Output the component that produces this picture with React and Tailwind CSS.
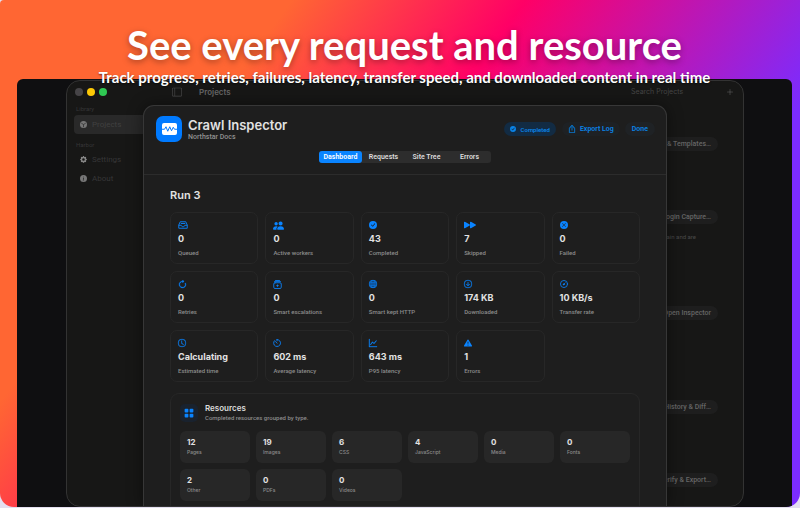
import React, { useState } from 'react';
import {
  BsArrowClockwise,
  BsArrowDownCircle,
  BsBoxArrowUp,
  BsCheckCircleFill,
  BsClock,
  BsExclamationTriangleFill,
  BsFastForwardFill,
  BsGearFill,
  BsGlobe,
  BsGraphUp,
  BsGridFill,
  BsInfoCircleFill,
  BsLayoutSidebar,
  BsPeopleFill,
  BsPlusLg,
  BsXCircleFill,
} from 'react-icons/bs';

const TrayIcon = () => (
  <svg viewBox="0 0 20 16" className="h-[8px] w-[10px]" fill="none" stroke="currentColor" strokeWidth="1.8" strokeLinejoin="round">
    <path d="M1.5 8 4.5 1.5h11L18.5 8v6.5h-17z" />
    <path d="M1.5 8.5h5c0 4 7 4 7 0h5M5.5 5h9" />
  </svg>
);

const EscalateIcon = () => (
  <svg viewBox="0 0 18 18" className="size-[9px]" fill="none" stroke="currentColor" strokeWidth="1.7" strokeLinecap="round">
    <rect x="1.5" y="5.5" width="15" height="11.5" rx="2.5" />
    <path d="M3 3.2h12M5 1h8" />
    <path d="M9 8l1 2.3 2.4 1-2.4 1L9 14.6l-1-2.3-2.4-1 2.4-1z" fill="currentColor" stroke="none" />
  </svg>
);

const GaugeIcon = () => (
  <svg viewBox="0 0 18 18" className="size-[8px] overflow-visible" fill="none" stroke="currentColor" strokeWidth="1.8" strokeLinecap="round">
    <circle cx="9" cy="9" r="8" />
    <path d="M8 10l3.6-3.6" />
    <circle cx="8.3" cy="9.8" r="1.2" fill="currentColor" />
  </svg>
);

const TimerIcon = () => (
  <svg viewBox="0 0 18 18" className="size-[8px] overflow-visible" fill="none" stroke="currentColor" strokeWidth="2" strokeLinecap="round">
    <path d="M9 1.2v3M9 1.2a7.8 7.8 0 1 1-5.6 2.5" />
    <path d="M5.8 5.8 9 9.4" />
  </svg>
);

const WaveIcon = () => (
  <svg viewBox="0 0 30 24" className="h-[12px] w-[15px]">
    <rect width="30" height="24" rx="4" fill="#fff" />
    <path d="M0 12.5h5l3-5 3.5 9 4-9 3.5 8 3.5-7 2.5 4h5" fill="none" stroke="#007aff" strokeWidth="2" strokeLinejoin="round" />
  </svg>
);

const CubeIcon = () => (
  <svg viewBox="0 0 16 16" className="size-[7px]">
    <circle cx="8" cy="8" r="8" fill="currentColor" />
    <path d="M3 5l5 3 5-3M8 8v6" fill="none" stroke="#2a2a2a" strokeWidth="1.6" />
  </svg>
);

const stats = [
  { icon: <TrayIcon />, value: '0', label: 'Queued' },
  { icon: <BsPeopleFill className="size-[11px]" />, value: '0', label: 'Active workers' },
  { icon: <BsCheckCircleFill />, value: '43', label: 'Completed' },
  { icon: <BsFastForwardFill className="size-[12px]" />, value: '7', label: 'Skipped' },
  { icon: <BsXCircleFill />, value: '0', label: 'Failed' },
  { icon: <BsArrowClockwise className="size-[9px] stroke-[0.8]" />, value: '0', label: 'Retries' },
  { icon: <EscalateIcon />, value: '0', label: 'Smart escalations' },
  { icon: <BsGlobe className="overflow-visible stroke-[0.4]" />, value: '0', label: 'Smart kept HTTP' },
  { icon: <BsArrowDownCircle className="overflow-visible stroke-[0.5]" />, value: '174 KB', label: 'Downloaded' },
  { icon: <GaugeIcon />, value: '10 KB/s', label: 'Transfer rate' },
  { icon: <BsClock className="overflow-visible stroke-[0.5]" />, value: 'Calculating', label: 'Estimated time' },
  { icon: <TimerIcon />, value: '602 ms', label: 'Average latency' },
  { icon: <BsGraphUp className="overflow-visible stroke-[0.7]" />, value: '643 ms', label: 'P95 latency' },
  { icon: <BsExclamationTriangleFill />, value: '1', label: 'Errors' },
];

const resources = [
  { value: 12, label: 'Pages' },
  { value: 19, label: 'Images' },
  { value: 6, label: 'CSS' },
  { value: 4, label: 'JavaScript' },
  { value: 0, label: 'Media' },
  { value: 0, label: 'Fonts' },
  { value: 2, label: 'Other' },
  { value: 0, label: 'PDFs' },
  { value: 0, label: 'Videos' },
];

const tabs = ['Dashboard', 'Requests', 'Site Tree', 'Errors'];

const Sidebar = () => (
  <aside className="w-[90px] shrink-0 pl-[7px] pt-[7px] font-['Roboto',sans-serif] text-[6px] text-[#363636]">
    <div className="flex h-[8px] gap-[4px] pl-px">
      <span className="size-[8px] rounded-full bg-[#464447]" />
      <span className="size-[8px] rounded-full bg-[#fdc906]" />
      <span className="size-[8px] rounded-full bg-[#2fc953]" />
    </div>
    <p className="mt-[8px] pl-[2px] leading-[10px]">Library</p>
    <nav className="text-[8px]">
      <a href="#projects" className="mt-px flex h-[19px] items-center gap-[5px] rounded-[4px] bg-[#292929] pl-[6px] text-[#404040]">
        <span className="text-[#767676]"><CubeIcon /></span>
        Projects
      </a>
      <p className="mt-[6px] pl-[2px] text-[6px] leading-[10px]">Harbor</p>
      <a href="#settings" className="flex h-[19px] items-center gap-[5px] pl-[6px]">
        <BsGearFill className="size-[7px] text-[#858585]" />
        Settings
      </a>
      <a href="#about" className="flex h-[19px] items-center gap-[5px] pl-[6px]">
        <BsInfoCircleFill className="size-[7px] text-[#777]" />
        About
      </a>
    </nav>
  </aside>
);

const ActionButton = ({ children }) => (
  <button className="h-[14px] rounded-full bg-[#1e1e1e] px-[7px] font-['Roboto',sans-serif] text-[7px] font-medium text-[#666]">
    {children}
  </button>
);

const ProjectsPane = () => (
  <div className="flex min-w-0 flex-1 flex-col">
    <div className="flex h-[22px] shrink-0 items-center pl-[15px] pr-[9px] text-[#666]">
      <BsLayoutSidebar className="size-[10px] text-[#4c4c4c]" />
      <h2 className="ml-[17px] text-[8px] font-semibold">Projects</h2>
      <input
        type="search"
        aria-label="Search Projects"
        placeholder="Search Projects"
        className="ml-auto w-[88px] bg-transparent text-[7px] placeholder:text-[#454545]"
      />
      <button aria-label="New project" className="ml-[7px]"><BsPlusLg className="size-[8px]" /></button>
    </div>
    <div className="flex flex-col items-end pr-[25px] pt-[34px]">
      <ActionButton>&amp; Templates…</ActionButton>
      <div className="mt-[59px] flex flex-col items-end">
        <ActionButton>Login Capture…</ActionButton>
        <p className="mt-[8px] pr-[22px] font-['Roboto',sans-serif] text-[6px] leading-[10px] text-[#4a4a4a]">domain and are</p>
      </div>
      <div className="mt-[64px] flex"><ActionButton>Open Inspector</ActionButton></div>
      <div className="mt-[80px] flex"><ActionButton>History &amp; Diff…</ActionButton></div>
      <div className="mt-[59px] flex"><ActionButton>Verify &amp; Export…</ActionButton></div>
    </div>
  </div>
);

const Inspector = () => {
  const [activeTab, setActiveTab] = useState('Dashboard');

  return (
    <section
      aria-label="Crawl Inspector"
      className="absolute inset-x-[76px] bottom-0 top-[24px] overflow-hidden rounded-t-[11px] border-x border-t border-[#373737] bg-[#1e1e1e] shadow-[0_0_16px_rgba(0,0,0,0.45)]"
    >
      <header className="border-b border-[#2c2c2c] pb-[11px] pt-[10px]">
        <div className="flex items-center pl-[12px] pr-[11px]">
          <span className="flex size-[26px] items-center justify-center rounded-[7px] bg-[#007aff]"><WaveIcon /></span>
          <div className="ml-[6px]">
            <h2 className="text-[13px] font-semibold leading-[16px] text-[#e2e2e2]">Crawl Inspector</h2>
            <p className="font-['Roboto',sans-serif] text-[7px] font-medium leading-[9px] text-[#929292]">Northstar Docs</p>
          </div>
          <div className="ml-auto flex items-center font-['Roboto',sans-serif] text-[7px] font-semibold text-[#0a84e8]">
            <span className="flex h-[14px] items-center gap-[5px] rounded-full bg-[#122b43] px-[6px] text-[6px]">
              <BsCheckCircleFill className="size-[6px]" />
              Completed
            </span>
            <button className="ml-[6px] flex h-[14px] items-center gap-[4px] rounded-full bg-[#1e2124] px-[6px]">
              <BsBoxArrowUp className="size-[8px] stroke-[0.5]" />
              Export Log
            </button>
            <button className="ml-[5px] h-[14px] rounded-full bg-[#1f2225] px-[7px]">Done</button>
          </div>
        </div>
        <div className="mt-[9px] flex justify-center">
          <div role="tablist" className="grid w-[172px] grid-cols-4 rounded-[3px] bg-[#2d2d2d] font-['Roboto',sans-serif]">
            {tabs.map((tab) => (
              <button
                key={tab}
                role="tab"
                aria-selected={activeTab === tab}
                onClick={() => setActiveTab(tab)}
                className={`h-[12px] rounded-[3px] text-[7px] font-semibold ${
                  activeTab === tab ? 'bg-[#0a84ff] text-white' : 'text-[#dcdcdc]'
                }`}
              >
                {tab}
              </button>
            ))}
          </div>
        </div>
      </header>

      <div className="px-[26px] pt-[13px]">
        <h3 className="text-[11px] font-semibold leading-[14px] text-[#e2e2e2]">Run 3</h3>
        <div className="mt-[10px] grid grid-cols-5 gap-[7px]">
          {stats.map((stat) => (
            <div key={stat.label} className="h-[52px] rounded-[7px] border border-[#272727] pl-[7px] pt-[7px]">
              <div className="flex h-[10px] items-center text-[8px] text-[#0a84ff]">{stat.icon}</div>
              <p className="mt-[3px] text-[9px] font-bold leading-[12px] text-[#e2e2e2]">{stat.value}</p>
              <p className="mt-[4px] font-['Roboto',sans-serif] text-[6px] font-medium leading-[8px] text-[#8c8c8c]">{stat.label}</p>
            </div>
          ))}
        </div>

        <div className="mt-[11px] rounded-[9px] border border-[#272727] px-[9px] pb-[12px] pt-[9px]">
          <div className="flex items-center gap-[7px]">
            <span className="flex size-[18px] items-center justify-center rounded-[5px] bg-[#19222e]">
              <BsGridFill className="size-[10px] text-[#0a84ff]" />
            </span>
            <div>
              <h4 className="text-[8px] font-semibold leading-[10px] text-[#dcdcdc]">Resources</h4>
              <p className="font-['Roboto',sans-serif] text-[6px] font-medium leading-[9px] text-[#8c8c8c]">
                Completed resources grouped by type.
              </p>
            </div>
          </div>
          <div className="mt-[9px] grid grid-cols-6 gap-[6px]">
            {resources.map((item) => (
              <div key={item.label} className="h-[32px] rounded-[6px] bg-[#272727] pl-[7px] pt-[6px]">
                <p className="text-[8px] font-bold leading-[11px] text-[#e2e2e2]">{item.value}</p>
                <p className="text-[5px] font-medium leading-[8px] text-[#8c8c8c]">{item.label}</p>
              </div>
            ))}
          </div>
        </div>
      </div>
    </section>
  );
};

const App = () => {
  return (
    <div className="h-screen overflow-hidden bg-[#e4dff0] pb-px font-['Inter',sans-serif]">
      <main className="flex h-full flex-col overflow-hidden rounded-b-[14px] rounded-tl-[4px] bg-[linear-gradient(126deg,#ff6633_25%,#ff0066_45%,#7b2cff_75%)]">
        <header className="relative z-10 -mb-[7px] pl-[9px] pt-[21px] text-center font-['Lato',sans-serif] text-white">
          <h1 className="text-[40px] font-bold leading-[48px] [text-shadow:0_2px_6px_rgba(0,0,0,0.35)]">See every request and resource</h1>
          <p className="text-[15px] font-bold leading-[17px] [text-shadow:0_1px_2px_rgba(0,0,0,0.6)]">
            Track progress, retries, failures, latency, transfer speed, and downloaded content in real time
          </p>
        </header>
        <div className="ml-[17px] mr-[8px] min-h-0 flex-1 overflow-hidden rounded-t-[6px] bg-[#0f0f11] pl-[49px] pr-[48px] pt-px">
          <div className="relative flex h-full overflow-hidden rounded-[14px] border border-[#333] bg-[#171716]">
            <Sidebar />
            <ProjectsPane />
            <Inspector />
          </div>
        </div>
      </main>
    </div>
  );
};

export default App;
